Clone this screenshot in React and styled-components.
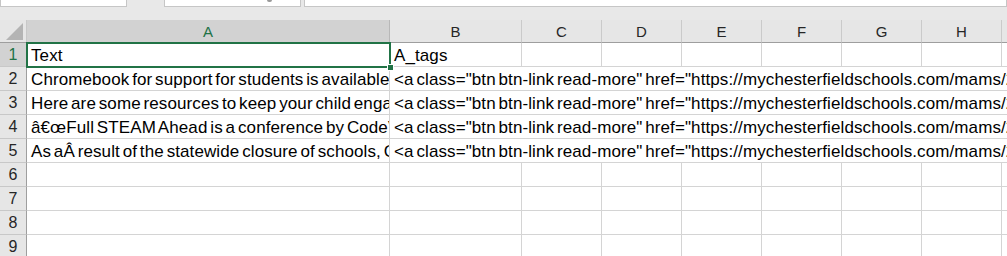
import React from 'react';
import styled, { createGlobalStyle } from 'styled-components';

const GlobalStyle = createGlobalStyle`
  html, body {
    margin: 0;
    padding: 0;
    background: #e6e6e6;
    overflow: hidden;
  }
  body {
    font-family: 'Liberation Sans', Arial, sans-serif;
  }
`;

const COLS = ['A', 'B', 'C', 'D', 'E', 'F', 'G', 'H', 'I'];
const GREEN = '#217346';

const Window = styled.div`
  width: 1007px;
  height: 256px;
  overflow: hidden;
  display: flex;
  flex-direction: column;
  background: #fff;
`;

const TabStrip = styled.div`
  height: 20px;
  flex: none;
  display: flex;
  align-items: flex-start;
  background: #e8e8e8;
`;

const TabBox = styled.div`
  position: relative;
  height: 6px;
  width: ${props => props.width};
  margin-left: ${props => props.offset || '0'};
  background: #fff;
  border: 1px solid #c6c6c6;
  border-top: none;
  flex: ${props => (props.grow ? '1' : 'none')};
`;

const DropGlyph = styled.span`
  position: absolute;
  right: 28px;
  top: 0;
  width: 5px;
  height: 2px;
  border-radius: 0 0 3px 3px;
  background: #9a9a9a;
`;

const Grid = styled.div`
  display: grid;
  grid-template-columns: 27px 363px 132px repeat(7, 80px);
  grid-auto-rows: 24px;
  grid-template-rows: 23px;
  width: max-content;
`;

const Corner = styled.div`
  background: #e6e6e6;
  border-right: 1px solid #c8c8c8;
  border-bottom: 1px solid #9e9e9e;
  display: flex;
  align-items: flex-end;
  justify-content: flex-end;
  padding: 0 3px 2px 0;
`;

const ColHeader = styled.div`
  background: ${props => (props.active ? '#d2d2d2' : '#e6e6e6')};
  color: ${props => (props.active ? GREEN : '#262626')};
  border-right: 1px solid ${props => (props.active ? '#b8b8b8' : '#cacaca')};
  border-bottom: 1px solid ${props => (props.active ? GREEN : '#9e9e9e')};
  font-size: 15px;
  line-height: 23px;
  text-align: center;
`;

const RowHeader = styled.div`
  background: ${props => (props.active ? '#d2d2d2' : '#e6e6e6')};
  color: ${props => (props.active ? GREEN : '#262626')};
  border-right: 1px solid #9e9e9e;
  border-bottom: 1px solid #c8c8c8;
  font-size: 16px;
  line-height: 24px;
  text-align: center;
`;

const Cell = styled.div`
  position: relative;
  box-sizing: border-box;
  height: 100%;
  grid-column: ${props => props.span || 'auto'};
  border-right: 1px solid #d4d4d4;
  border-bottom: 1px solid #d4d4d4;
  padding: 0 0 0 4px;
  font-size: 17px;
  line-height: 25px;
  letter-spacing: 0.1px;
  word-spacing: -2px;
  color: #000;
  white-space: nowrap;
  overflow: hidden;
  background: #fff;
`;

const ActiveCell = styled.div`
  position: relative;
  z-index: 1;
`;

const Selection = styled.div`
  position: absolute;
  left: -1px;
  top: -1px;
  right: -1px;
  bottom: -1px;
  border: 2px solid ${GREEN};
  pointer-events: none;
`;

const FillHandle = styled.span`
  position: absolute;
  right: -5px;
  bottom: -5px;
  width: 5px;
  height: 5px;
  background: ${GREEN};
  border: 1px solid #fff;
`;

const rows = [
  {
    a: 'Chromebook for support for students is available (see the attached guide for details)',
    b: '<a class="btn btn-link read-more" href="https://mychesterfieldschools.com/mams/2020/03/chromebook-support/">',
  },
  {
    a: 'Here are some resources to keep your child engaged while schools are closed',
    b: '<a class="btn btn-link read-more" href="https://mychesterfieldschools.com/mams/2020/03/resources/">',
  },
  {
    a: 'â€œFull STEAM Ahead is a conference by CodeVA for teachers',
    b: '<a class="btn btn-link read-more" href="https://mychesterfieldschools.com/mams/2020/02/full-steam-ahead/">',
  },
  {
    a: 'As aÂ result of the statewide closure of schools, Chesterfield County Public Schools',
    b: '<a class="btn btn-link read-more" href="https://mychesterfieldschools.com/mams/2020/03/closure/">',
  },
];

const CornerMark = () => (
  <svg width="17" height="17" viewBox="0 0 17 17">
    <polygon points="17,0 17,17 0,17" fill="#b4b4b4" />
  </svg>
);

const App = () => {
  const blankRows = [6, 7, 8, 9];

  return (
    <>
      <GlobalStyle />
      <Window>
        <TabStrip>
          <TabBox width="125px" />
          <TabBox width="135px" offset="37px">
            <DropGlyph />
          </TabBox>
          <TabBox grow offset="3px" />
        </TabStrip>
        <Grid>
          <Corner>
            <CornerMark />
          </Corner>
          {COLS.map(c => (
            <ColHeader key={c} active={c === 'A'}>
              {c}
            </ColHeader>
          ))}

          <RowHeader active>1</RowHeader>
          <ActiveCell>
            <Cell>Text</Cell>
            <Selection>
              <FillHandle />
            </Selection>
          </ActiveCell>
          <Cell>A_tags</Cell>
          {COLS.slice(2).map(c => (
            <Cell key={c} />
          ))}

          {rows.map((r, i) => (
            <React.Fragment key={i}>
              <RowHeader>{i + 2}</RowHeader>
              <Cell>{r.a}</Cell>
              <Cell span="3 / -1">{r.b}</Cell>
            </React.Fragment>
          ))}

          {blankRows.map(n => (
            <React.Fragment key={n}>
              <RowHeader>{n}</RowHeader>
              {COLS.map(c => (
                <Cell key={c} />
              ))}
            </React.Fragment>
          ))}
        </Grid>
      </Window>
    </>
  );
};

export default App;
